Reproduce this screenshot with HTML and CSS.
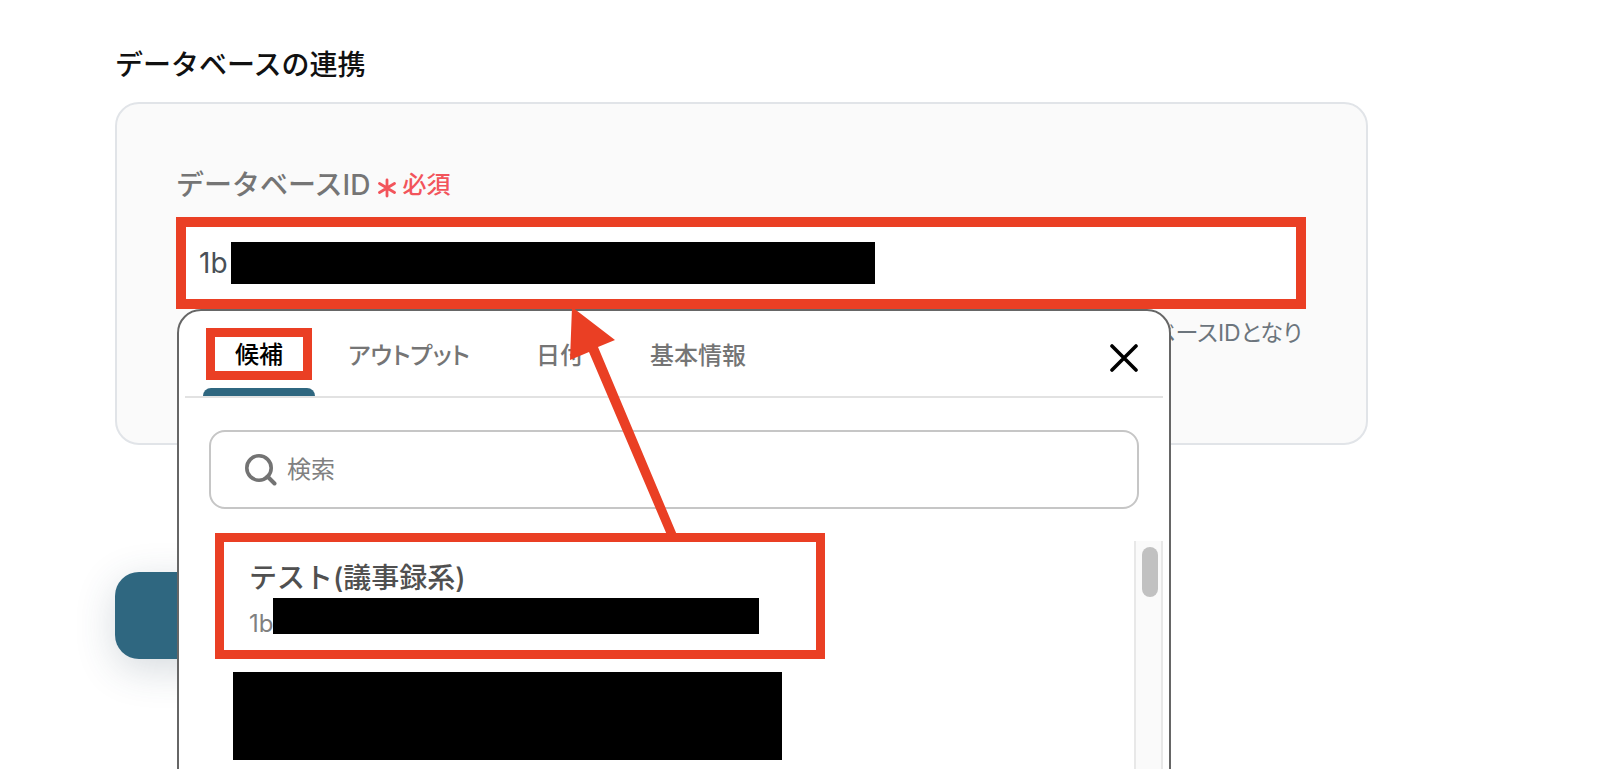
FILE: index.html
```html
<!DOCTYPE html>
<html lang="ja">
<head>
    <meta charset="UTF-8">
    <meta name="viewport" content="width=device-width, initial-scale=1.0">
    <title>データベースの連携</title>
    <link rel="stylesheet" href="styles.css">
</head>
<body>
    <main class="page">
        <h1>データベースの連携</h1>

        <section class="card">
            <div class="label-row">
                <label for="databaseId">データベースID</label>
                <span class="required">
                    <svg width="18" height="26" viewBox="0 0 18 26">
                        <path d="M9 8v16M1.5 11.5l15 9M16.5 11.5l-15 9" stroke="currentColor" stroke-width="2.8" stroke-linecap="round"/>
                    </svg>
                    必須
                </span>
            </div>

            <div class="field">
                <div class="field-box">
                    <input type="text" id="databaseId" value="1b">
                    <span class="mask field-mask"></span>
                </div>

                <div class="popup">
                    <div class="tabs">
                        <button class="tab active"><span class="tab-mark">候補</span></button>
                        <button class="tab">アウトプット</button>
                        <button class="tab">日付</button>
                        <button class="tab">基本情報</button>
                        <button class="close-btn" aria-label="閉じる">
                            <svg width="28" height="28" viewBox="0 0 28 28">
                                <path d="M2 2l24 24M26 2L2 26" stroke="#000" stroke-width="3.6" stroke-linecap="round"/>
                            </svg>
                        </button>
                    </div>

                    <div class="search">
                        <svg width="32" height="32" viewBox="0 0 32 32" fill="none">
                            <circle cx="14" cy="14" r="12.2" stroke="#737373" stroke-width="3.6"/>
                            <path d="M22.5 22.5l7 7" stroke="#737373" stroke-width="4" stroke-linecap="round"/>
                        </svg>
                        <input type="text" placeholder="検索" aria-label="検索">
                    </div>

                    <div class="results">
                        <div class="result-list">
                            <button class="result">
                                <span class="result-title">テスト(議事録系)</span>
                                <span class="result-id">1b<span class="mask id-mask"></span></span>
                            </button>
                            <div class="mask result-mask"></div>
                        </div>
                        <div class="scrollbar">
                            <div class="thumb"></div>
                        </div>
                    </div>

                    <svg class="arrow" width="116" height="228" viewBox="0 0 116 228">
                        <path d="M6 0L49 33L32 40L111 228H101L23 45L4 53Z" fill="#ea3f24"/>
                    </svg>
                </div>
            </div>

            <p class="help">ベースIDとなり</p>
        </section>

        <button class="submit-btn" aria-label="次へ"></button>
    </main>
</body>
</html>
```

FILE: styles.css
```css
* {
    margin: 0;
    padding: 0;
    box-sizing: border-box;
}

body {
    height: 100vh;
    overflow: hidden;
    background: #fff;
    font-family: Inter, 'Noto Sans CJK JP', sans-serif;
    color: #111;
}

button,
input {
    border: none;
    background: none;
    font-family: inherit;
    color: inherit;
    outline: none;
}

button {
    cursor: pointer;
}

svg {
    display: block;
    flex-shrink: 0;
    fill: none;
}

.page {
    padding: 45px 232px 0 115px;
}

h1 {
    margin-bottom: 17px;
    font-size: 28px;
    font-weight: 500;
    line-height: 40px;
}

.card {
    padding: 61px 60px 94px 59px;
    background: #fafafa;
    border: 2px solid #e1e4e8;
    border-radius: 24px;
}

.label-row {
    display: flex;
    align-items: center;
    gap: 8px;
    margin-bottom: 12px;
    line-height: 40px;
}

.label-row label {
    font-size: 28px;
    font-weight: 500;
    color: #757575;
}

.required {
    display: flex;
    align-items: center;
    gap: 6px;
    font-size: 24px;
    font-weight: 500;
    color: #f2545b;
}

.field {
    position: relative;
}

.field-box {
    position: relative;
    z-index: 2;
    display: flex;
    align-items: center;
    height: 92px;
    padding-left: 13px;
    background: #fff;
    border: 10px solid #ea3f24;
}

.field-box input {
    width: 32px;
    font-size: 28px;
    color: #495057;
}

.mask {
    background: #000;
}

.field-mask {
    width: 644px;
    height: 42px;
}

/* suggestion popup */
.popup {
    position: absolute;
    z-index: 1;
    top: 100%;
    left: 1px;
    width: 88%;
    height: 560px;
    padding: 0 6px;
    background: #fff;
    border: 2px solid #666;
    border-radius: 24px;
}

.tabs {
    display: flex;
    height: 87px;
    padding: 0 25px 0 18px;
    border-bottom: 2px solid #e2e2e2;
}

.tab {
    position: relative;
    padding: 4px 33px 0;
    font-size: 24px;
    font-weight: 500;
    line-height: 34px;
    color: #757575;
    font-feature-settings: "palt";
}

.tab.active {
    padding: 0 3px;
    color: #000;
}

.tab.active::after {
    content: "";
    position: absolute;
    left: 0;
    right: 0;
    bottom: 0;
    height: 8px;
    background: #2f6780;
    border-radius: 8px 8px 0 0;
}

.tab-mark {
    display: block;
    padding: 2px 20px 0;
    line-height: 32px;
    border: 9px solid #ea3f24;
}

.close-btn {
    margin-left: auto;
    padding-top: 8px;
}

.search {
    display: flex;
    align-items: center;
    gap: 10px;
    height: 79px;
    margin: 32px 24px;
    padding: 0 34px;
    border: 2px solid #c6c6c6;
    border-radius: 16px;
}

.search input {
    flex: 1;
    font-size: 24px;
}

.search input::placeholder {
    color: #808080;
}

.results {
    display: flex;
    justify-content: space-between;
    height: 320px;
}

.result-list {
    flex: 1;
    padding-left: 30px;
    margin-top: -8px;
}

.result {
    display: block;
    width: 610px;
    height: 126px;
    padding: 16px 25px;
    border: 9px solid #ea3f24;
    text-align: left;
}

.result-title {
    display: block;
    font-size: 28px;
    font-weight: 500;
    line-height: 40px;
    color: #505050;
}

.result-id {
    display: flex;
    height: 36px;
    font-size: 24px;
    line-height: 52px;
    color: #808080;
}

.id-mask {
    width: 486px;
    height: 36px;
}

.result-mask {
    width: 549px;
    height: 88px;
    margin: 13px 18px;
}

.scrollbar {
    width: 29px;
    padding: 6px;
    background: #fafafa;
    border: solid #e8e8e8;
    border-width: 0 2px;
}

.thumb {
    width: 16px;
    height: 50px;
    margin: 0 auto;
    background: #c1c1c1;
    border-radius: 8px;
}

.arrow {
    position: absolute;
    top: -4px;
    left: 387px;
}

.help {
    margin-top: 8px;
    padding-right: 4px;
    font-size: 23px;
    line-height: 32px;
    text-align: right;
    color: #6c757d;
    font-feature-settings: "palt";
}

.submit-btn {
    display: block;
    width: 320px;
    height: 87px;
    margin-top: 127px;
    background: #2f6780;
    border-radius: 24px;
    box-shadow: 0 10px 40px rgba(47, 72, 88, 0.2);
}
```
